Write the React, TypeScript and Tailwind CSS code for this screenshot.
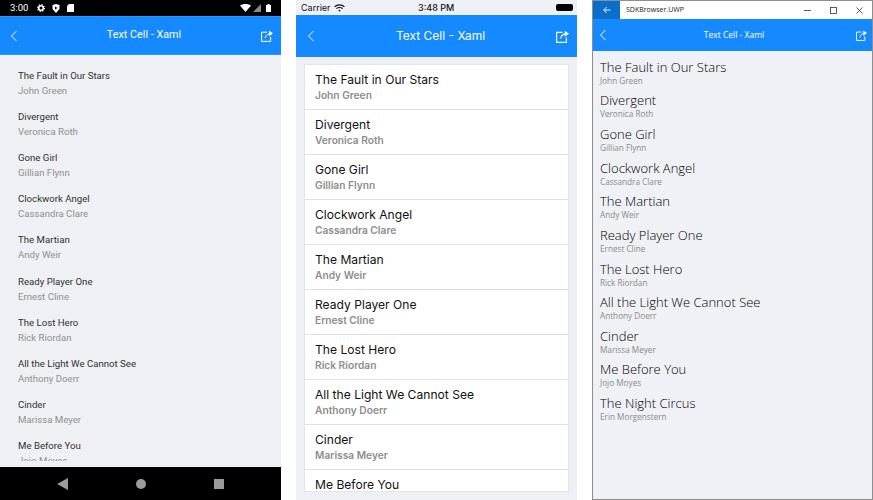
const books: [string, string][] = [
  ["The Fault in Our Stars", "John Green"],
  ["Divergent", "Veronica Roth"],
  ["Gone Girl", "Gillian Flynn"],
  ["Clockwork Angel", "Cassandra Clare"],
  ["The Martian", "Andy Weir"],
  ["Ready Player One", "Ernest Cline"],
  ["The Lost Hero", "Rick Riordan"],
  ["All the Light We Cannot See", "Anthony Doerr"],
  ["Cinder", "Marissa Meyer"],
  ["Me Before You", "Jojo Moyes"],
  ["The Night Circus", "Erin Morgenstern"],
];

function Back({ size = 14 }: { size?: number }) {
  return (
    <svg width={size} height={size} viewBox="0 0 14 14" fill="none" stroke="#fff" strokeWidth="1">
      <path d="M9.5 2 L4.5 7 L9.5 12" />
    </svg>
  );
}

function Share({ size = 12 }: { size?: number }) {
  return (
    <svg width={size} height={size} viewBox="0 0 12 12" fill="none" stroke="#fff" strokeWidth="1">
      <path d="M6 2.2 H0.6 V11.4 H9.6 V7" />
      <path d="M4.2 8 C4.6 5.4 6.8 3.6 9.6 3.6" />
      <path d="M8 0.6 L12 3.4 L8 6.2 Z" fill="#fff" stroke="none" />
    </svg>
  );
}

function Android() {
  return (
    <div className="w-[281px] h-[500px] flex flex-col bg-[#eff0f5] font-['Roboto',sans-serif]">
      <div className="h-[16px] bg-black flex items-center justify-between px-[10px] text-white">
        <div className="flex items-center">
          <span className="text-[9.5px] w-[27px]">3:00</span>
          <svg className="mr-[7px]" width="8" height="8" viewBox="0 0 8 8">
            <circle cx="4" cy="4" r="2.3" fill="none" stroke="#fff" strokeWidth="1.6" />
            <circle cx="4" cy="4" r="3.4" fill="none" stroke="#fff" strokeWidth="1.2" strokeDasharray="1.3 1.37" />
          </svg>
          <svg className="mr-[7px]" width="8" height="9" viewBox="0 0 8 9" fill="#fff"><path d="M0.5 1 L4 0 L7.5 1 V5 L4 9 L0.5 5 Z" /><path d="M3 2.5 L5.5 4 L3 5.5 Z" fill="#000" /></svg>
          <svg width="7" height="8" viewBox="0 0 7 8" fill="#fff"><path d="M2 0 H7 V8 H0 V2 Z" /></svg>
        </div>
        <div className="flex items-center">
          <svg width="11" height="8" viewBox="0 0 11 8" fill="#fff"><path d="M0 1.5 C3 -0.5 8 -0.5 11 1.5 L5.5 8 Z" /></svg>
          <svg className="ml-[2px]" width="8" height="8" viewBox="0 0 8 8" fill="#888"><path d="M0 8 L8 0 V8 Z" /></svg>
          <svg className="ml-[5px]" width="5" height="8" viewBox="0 0 5 8" fill="#fff"><path d="M1.5 0 H3.5 V1 H5 V8 H0 V1 H1.5 Z" /></svg>
        </div>
      </div>
      <div className="h-[39px] bg-[#1589ff] border-t border-b border-[#2e97ff] flex items-center justify-between pl-[7px] pr-[8px] text-white">
        <Back size={14} />
        <span className="text-[10.8px] ml-[6px]">Text Cell - Xaml</span>
        <Share size={12} />
      </div>
      <div className="h-[406px] overflow-hidden pt-[11.8px] pl-[18px] shrink-0">
        {books.slice(0, 10).map(([t, a]) => (
          <div key={t} className="h-[41.15px] flex flex-col">
            <span className="h-[17px] leading-[17px] text-[9.65px] text-[#303030]">{t}</span>
            <span className="h-[13px] leading-[13px] text-[9.65px] text-[#8f8f8f]">{a}</span>
          </div>
        ))}
      </div>
      <div className="flex-1" />
      <div className="h-[33px] bg-black flex items-center justify-between px-[57px]">
        <svg width="11" height="12" viewBox="0 0 11 12" fill="#9a9a9a"><path d="M11 0 V12 L0 6 Z" /></svg>
        <div className="w-[10px] h-[10px] rounded-full bg-[#9a9a9a]" />
        <div className="w-[10px] h-[10px] bg-[#9a9a9a]" />
      </div>
    </div>
  );
}

function Ios() {
  return (
    <div className="w-[281px] h-[500px] flex flex-col bg-[#eff0f5] font-['Inter',sans-serif]">
      <div className="h-[15px] flex items-center justify-between pl-[5px] pr-[4px] text-[#111] relative">
        <div className="flex items-center gap-[3px]">
          <span className="text-[9px]">Carrier</span>
          <svg width="11" height="8" viewBox="0 0 11 8" fill="none" stroke="#111" strokeWidth="1.2">
            <path d="M0.6 2.8 C3.4 0.2 7.6 0.2 10.4 2.8" />
            <path d="M2.4 4.6 C4 3.1 7 3.1 8.6 4.6" />
            <circle cx="5.5" cy="6.6" r="0.9" fill="#111" stroke="none" />
          </svg>
        </div>
        <span className="absolute left-[122px] text-[9px] font-medium">3:48 PM</span>
        <div className="w-[17px] h-[7px] rounded-[2px] bg-black" />
      </div>
      <div className="h-[42px] bg-[#1589ff] flex items-center justify-between pl-[8px] pr-[8px] text-white">
        <Back size={14} />
        <span className="text-[12px] ml-[7px]">Text Cell - Xaml</span>
        <Share size={13} />
      </div>
      <div className="flex-1 px-[8px] pt-[7px] pb-[8px] overflow-hidden">
        <div className="h-full bg-white border border-[#e4e5ea] overflow-hidden">
          {books.slice(0, 10).map(([t, a]) => (
            <div key={t} className="h-[45px] border-b border-[#e0e1e5] pl-[10px] pt-[6px] flex flex-col shrink-0">
              <span className="h-[17px] leading-[17px] text-[12.1px] text-[#111]">{t}</span>
              <span className="h-[14px] leading-[14px] text-[10.2px] font-semibold text-[#8e8e8e]">{a}</span>
            </div>
          ))}
        </div>
      </div>
    </div>
  );
}

function Uwp() {
  return (
    <div className="w-[281px] h-[500px] flex flex-col bg-[#eff1f6] border border-[#8e8e8e] font-['Open_Sans',sans-serif]">
      <div className="h-[18px] bg-white flex items-center text-[#222]">
        <div className="w-[27px] h-full bg-[#0a6fc9] flex items-center justify-center">
          <svg width="8" height="8" viewBox="0 0 8 8" fill="none" stroke="#fff" strokeWidth="0.9"><path d="M7.5 4 H0.8 M3.6 1 L0.8 4 L3.6 7" /></svg>
        </div>
        <span className="ml-[6px] text-[7px] flex-1">SDKBrowser.UWP</span>
        <svg className="mr-[19px]" width="7" height="7" viewBox="0 0 7 7" fill="none" stroke="#333" strokeWidth="0.8"><path d="M0 3.5 H7" /></svg>
        <svg className="mr-[19px]" width="7" height="7" viewBox="0 0 7 7" fill="none" stroke="#333" strokeWidth="0.8"><rect x="0.5" y="0.5" width="6" height="6" /></svg>
        <svg className="mr-[9px]" width="7" height="7" viewBox="0 0 7 7" fill="none" stroke="#333" strokeWidth="0.8"><path d="M0.5 0.5 L6.5 6.5 M6.5 0.5 L0.5 6.5" /></svg>
      </div>
      <div className="h-[32px] bg-[#1589ff] flex items-center justify-between pl-[3px] pr-[5px] text-white">
        <Back size={14} />
        <span className="text-[8.5px] ml-[2px]">Text Cell - Xaml</span>
        <Share size={11} />
      </div>
      <div className="flex-1 pt-[6.7px] pl-[7px] overflow-hidden">
        {books.map(([t, a]) => (
          <div key={t} className="h-[33.65px] flex flex-col">
            <span className="h-[18px] leading-[18px] text-[13px] font-light text-black">{t}</span>
            <span className="h-[12px] leading-[12px] mt-[-1px] text-[8.2px] text-[#8a8a8a]">{a}</span>
          </div>
        ))}
      </div>
    </div>
  );
}

export default function App() {
  return (
    <div className="w-[873px] h-[500px] bg-white flex justify-between overflow-hidden">
      <Android />
      <Ios />
      <Uwp />
    </div>
  );
}
